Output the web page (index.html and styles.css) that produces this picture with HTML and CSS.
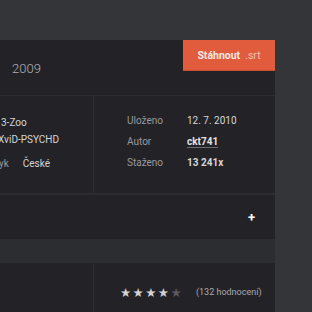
FILE: index.html
```html
<!DOCTYPE html>
<html lang="cs">
<head>
    <meta charset="UTF-8">
    <meta name="viewport" content="width=device-width, initial-scale=1.0">
    <title>Titulky</title>
    <link rel="stylesheet" href="styles.css">
</head>
<body>
    <div class="detail">
        <div class="detail-head">
            <div class="detail-year">2009</div>
            <a class="btn-download" href="#">Stáhnout <span class="ext">.srt</span></a>
        </div>

        <div class="detail-info">
            <div class="info-left">
                <div class="release first">3-Zoo</div>
                <div class="release second">XviD-PSYCHD</div>
                <div class="lang-row">
                    <span class="lang-label">Jazyk</span>
                    <span class="lang-value">České</span>
                </div>
            </div>
            <div class="info-right">
                <div class="info-row">
                    <span class="info-label">Uloženo</span>
                    <span class="info-value">12. 7. 2010</span>
                </div>
                <div class="info-row">
                    <span class="info-label">Autor</span>
                    <a class="info-value author" href="#">ckt741</a>
                </div>
                <div class="info-row">
                    <span class="info-label">Staženo</span>
                    <span class="info-value strong">13 241x</span>
                </div>
            </div>
        </div>

        <div class="detail-more">
            <span class="plus">+</span>
        </div>

        <div class="detail-rating">
            <div class="rating-left"></div>
            <div class="rating-right">
                <span class="stars">
                    <span class="star on">★</span><span class="star on">★</span><span class="star on">★</span><span class="star on">★</span><span class="star">★</span>
                </span>
                <span class="rating-count">(132 hodnocení)</span>
            </div>
        </div>
    </div>
</body>
</html>
```

FILE: styles.css
```css
body {
    margin: 0;
    background-color: #343539;
    font-family: Roboto, "Liberation Sans", sans-serif;
    color: #cfcfd1;
}
.detail {
    margin-top: 40px;
    margin-left: -40px;
    width: 315px;
    background-color: #2c2d31;
}
.detail-head {
    display: flex;
    justify-content: space-between;
    align-items: flex-start;
    height: 55px;
    background-color: #232327;
    margin-bottom: 1px;
}
.detail-year {
    padding-left: 52px;
    margin-top: 21px;
    font-size: 13px;
    font-weight: 300;
    color: #b0b0b4;
}
.btn-download {
    display: flex;
    align-items: center;
    justify-content: center;
    gap: 5px;
    width: 92px;
    height: 30px;
    background-color: #e05c3c;
    border-bottom: 1px solid #c94e31;
    color: #f4e8e4;
    font-size: 10.5px;
    font-weight: bold;
    text-decoration: none;
}
.btn-download .ext {
    font-weight: normal;
    color: #f0c2b4;
}
.detail-info {
    display: flex;
    height: 97px;
    background-color: #232327;
    margin-bottom: 2px;
}
.info-left {
    width: 134px;
    padding-left: 41px;
    padding-top: 18px;
    border-right: 1px solid #2e2f33;
    box-sizing: border-box;
    font-size: 10px;
    color: #d4d4d6;
}
.release {
    line-height: 17px;
}
.release.second {
    margin-left: -3px;
}
.lang-row {
    display: flex;
    gap: 14px;
    margin-top: 10px;
    margin-left: -18px;
}
.lang-label {
    color: #9a9a9e;
}
.info-right {
    padding-left: 33px;
    padding-top: 14px;
    font-size: 10px;
}
.info-row {
    display: flex;
    line-height: 21px;
}
.info-label {
    width: 60px;
    color: #9a9a9e;
}
.info-value {
    color: #d6d6d8;
}
.info-value.author {
    font-weight: bold;
    color: #e2e2e4;
    text-decoration: underline;
    text-decoration-color: #6c6c70;
    text-underline-offset: 2px;
}
.info-value.strong {
    font-weight: bold;
}
.detail-more {
    display: flex;
    justify-content: flex-end;
    align-items: center;
    height: 44px;
    padding-right: 20px;
    background-color: #232327;
    margin-bottom: 24px;
}
.plus {
    font-size: 13px;
    font-weight: bold;
    color: #ffffff;
}
.detail-rating {
    display: flex;
    height: 60px;
    background-color: #232327;
}
.rating-left {
    width: 134px;
    border-right: 1px solid #2e2f33;
    box-sizing: border-box;
}
.rating-right {
    display: flex;
    align-items: center;
    height: 58px;
    padding-left: 26px;
}
.stars {
    display: flex;
    margin-right: 13px;
}
.star {
    width: 12.6px;
    font-size: 12.5px;
    color: #5a5a5e;
    font-family: "DejaVu Sans", sans-serif;
}
.star.on {
    color: #d2d2d4;
}
.rating-count {
    font-size: 9px;
    color: #a9a9ad;
}
```
